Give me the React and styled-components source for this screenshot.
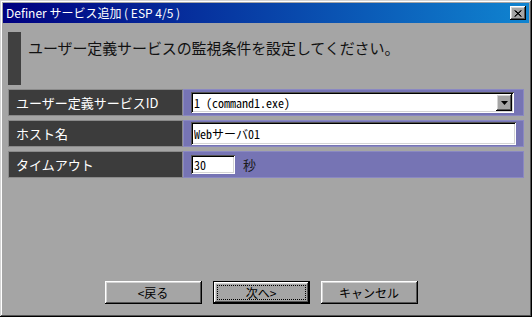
import React from 'react';
import styled, { createGlobalStyle } from 'styled-components';

const Global = createGlobalStyle`
  html, body { margin: 0; padding: 0; background: #a5a5a5; }
  body { width: 532px; height: 317px; overflow: hidden; }
  * { box-sizing: border-box; }
`;

const raised = `box-shadow: inset -1px -1px #000, inset 1px 1px #fff, inset -2px -2px #555, inset 2px 2px #d4d4d4;`;
const sunken = `box-shadow: inset 1px 1px #555, inset -1px -1px #fff, inset 2px 2px #000, inset -2px -2px #d4d4d4;`;

const Window = styled.div`
  width: 532px;
  height: 317px;
  background: #a5a5a5;
  padding: 3px;
  display: flex;
  flex-direction: column;
  box-shadow: inset -1px -1px #000, inset 1px 1px #d4d4d4, inset -2px -2px #555, inset 2px 2px #fff;
  font-family: "Noto Sans CJK JP", sans-serif;
`;

const TitleBar = styled.div`
  height: 20px;
  flex: none;
  display: flex;
  align-items: center;
  justify-content: space-between;
  padding: 0 3px 0 3px;
  background: linear-gradient(90deg, #000080, #1084d0);
  color: #fff;
  font-size: 12px;
  line-height: 1;
  white-space: pre;
`;

const CloseButton = styled.div`
  width: 16px;
  height: 14px;
  background: #a5a5a5;
  display: flex;
  align-items: center;
  justify-content: center;
  ${raised}
`;

const Body = styled.div`
  flex: 1;
  display: flex;
  flex-direction: column;
  padding: 9px 5px 0 5px;
`;

const Header = styled.div`
  display: flex;
  gap: 7px;
  height: 53px;
  margin-bottom: 4px;
`;

const HeaderBar = styled.div`
  width: 13px;
  height: 53px;
  background: #404040;
`;

const HeaderText = styled.div`
  padding-top: 5px;
  font-size: 15px;
  line-height: 22px;
  letter-spacing: -0.1px;
  color: #111;
`;

const Rows = styled.div`
  display: flex;
  flex-direction: column;
  gap: 4px;
`;

const Row = styled.div`
  display: grid;
  grid-template-columns: 175px 1fr;
  height: 27px;
`;

const Label = styled.div`
  background: #3c3c3c;
  border: 1px solid #8a8a8a;
  color: #fff;
  font-size: 13px;
  display: flex;
  align-items: center;
  padding-left: 7px;
`;

const Value = styled.div`
  background: #7674b4;
  border: 1px solid #8a88c2;
  display: flex;
  align-items: center;
  padding-left: 7px;
  gap: 8px;
`;

const Field = styled.div`
  width: ${p => p.$w}px;
  height: ${p => p.$h}px;
  background: #fff;
  display: flex;
  align-items: center;
  padding: 2px 2px 2px 3px;
  font-family: "Noto Sans Mono CJK JP", "Liberation Mono", "Noto Sans CJK JP", monospace;
  font-size: 12px;
  color: #000;
  ${sunken}
`;

const FieldText = styled.span`
  flex: 1;
  white-space: pre;
  overflow: hidden;
`;

const DropButton = styled.div`
  width: 16px;
  height: 17px;
  background: #a5a5a5;
  display: flex;
  align-items: center;
  justify-content: center;
  ${raised}
`;

const Unit = styled.span`
  font-size: 13px;
  color: #1a1a1a;
`;

const Footer = styled.div`
  margin-top: auto;
  display: flex;
  justify-content: center;
  gap: 11px;
  padding: 0 10px 10px 0;
`;

const Button = styled.div`
  position: relative;
  width: 97px;
  height: 23px;
  background: #a5a5a5;
  display: flex;
  align-items: center;
  justify-content: center;
  font-size: 12px;
  color: #000;
  border: ${p => (p.$default ? '1px solid #000' : 'none')};
  ${raised}
  ${p => p.$default && `
    &::after {
      content: '';
      position: absolute;
      inset: 3px;
      border: 1px dotted #000;
    }
  `}
`;

export default function App() {
  return (
    <>
      <Global />
      <Window>
        <TitleBar>
          <span>Definer サービス追加 ( ESP 4/5 )</span>
          <CloseButton>
            <svg width="8" height="7" viewBox="0 0 8 7">
              <path d="M0.5 0.5 L7 6.5 M1.5 0.5 L7.5 6.5 M7 0.5 L0.5 6.5 M7.5 0.5 L1 6.5" stroke="#000" strokeWidth="1" />
            </svg>
          </CloseButton>
        </TitleBar>
        <Body>
          <Header>
            <HeaderBar />
            <HeaderText>ユーザー定義サービスの監視条件を設定してください。</HeaderText>
          </Header>
          <Rows>
            <Row>
              <Label>ユーザー定義サービスID</Label>
              <Value>
                <Field $w={323} $h={21}>
                  <FieldText>1 (command1.exe)</FieldText>
                  <DropButton>
                    <svg width="7" height="4" viewBox="0 0 7 4">
                      <path d="M0 0 H7 L3.5 4 Z" fill="#000" />
                    </svg>
                  </DropButton>
                </Field>
              </Value>
            </Row>
            <Row>
              <Label>ホスト名</Label>
              <Value>
                <Field $w={325} $h={23}>
                  <FieldText>Webサーバ01</FieldText>
                </Field>
              </Value>
            </Row>
            <Row>
              <Label>タイムアウト</Label>
              <Value>
                <Field $w={44} $h={19}>
                  <FieldText>30</FieldText>
                </Field>
                <Unit>秒</Unit>
              </Value>
            </Row>
          </Rows>
        </Body>
        <Footer>
          <Button>&lt;戻る</Button>
          <Button $default>次へ&gt;</Button>
          <Button>キャンセル</Button>
        </Footer>
      </Window>
    </>
  );
}
